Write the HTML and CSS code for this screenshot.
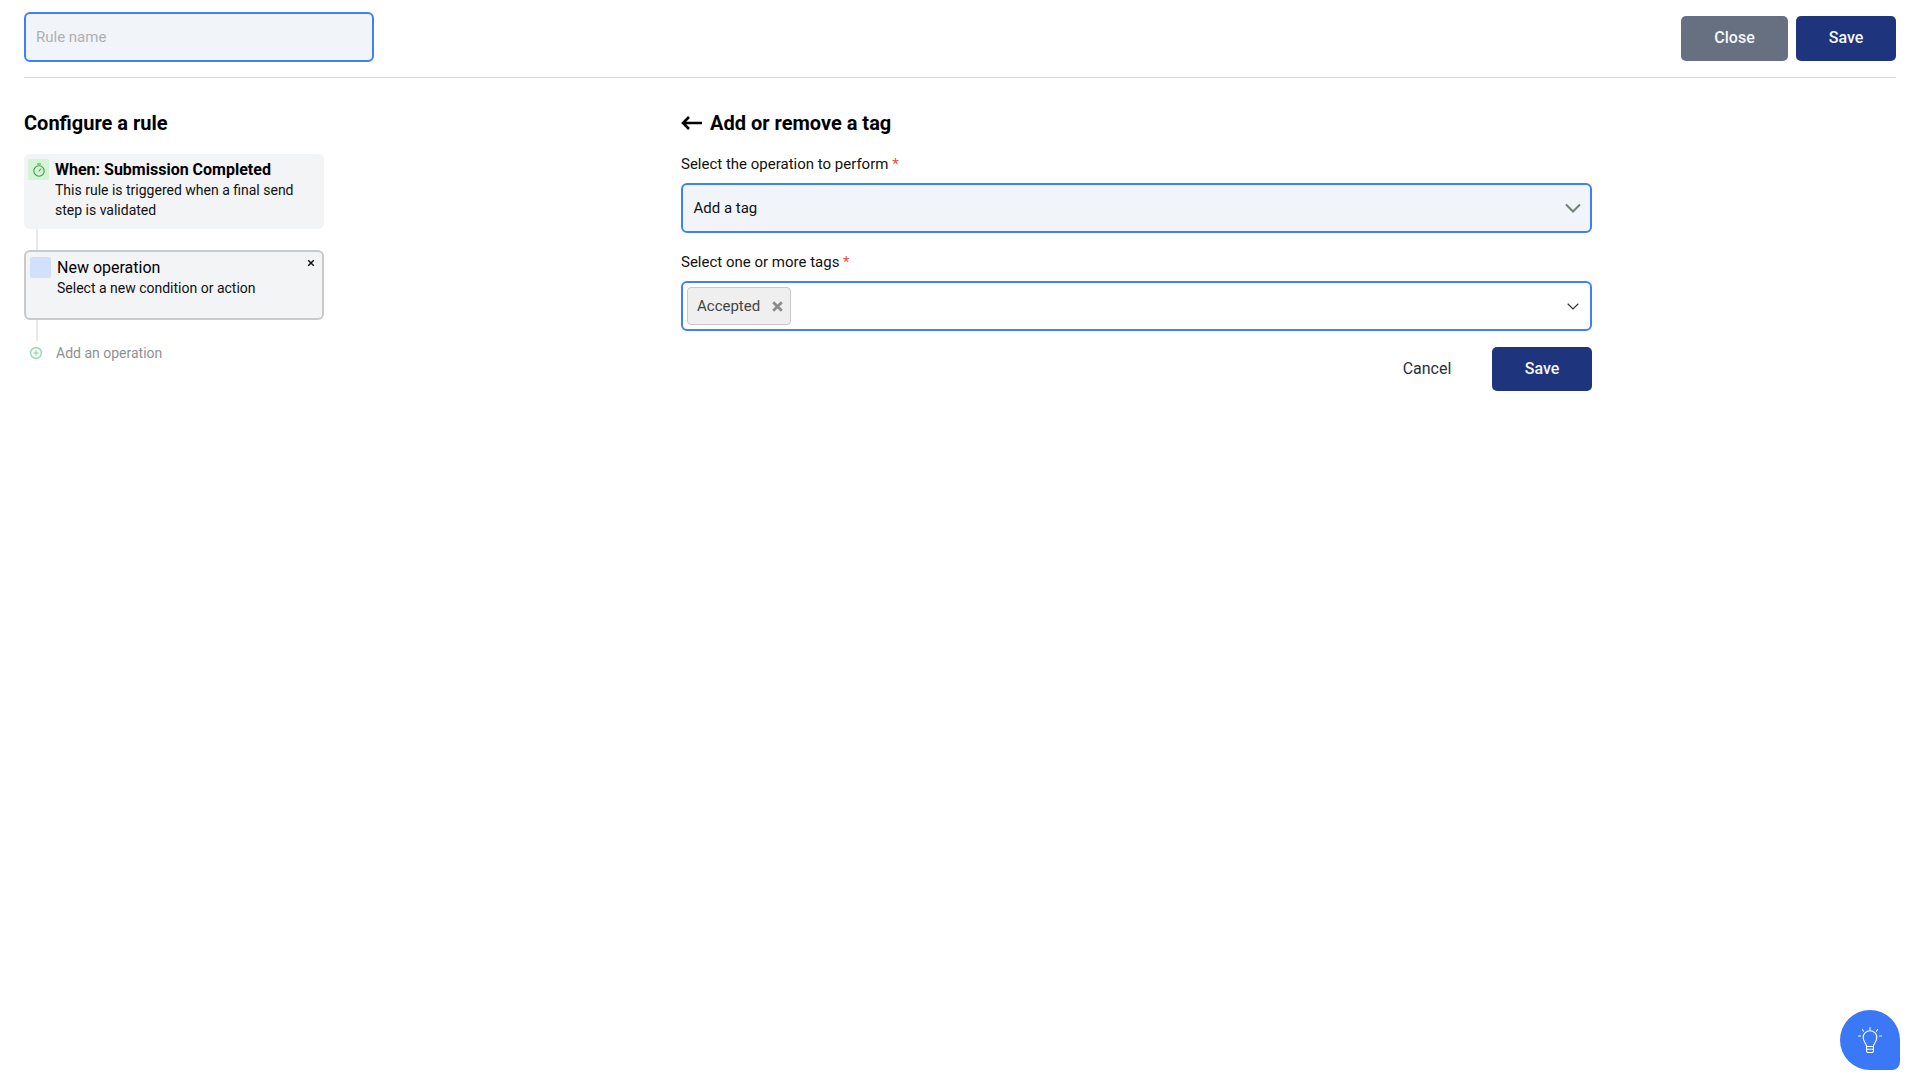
FILE: index.html
```html
<!DOCTYPE html>
<html lang="en">
<head>
<meta charset="utf-8">
<title>Configure a rule</title>
<link rel="stylesheet" href="styles.css">
</head>
<body>
<header class="topbar">
  <input class="rule-name" type="text" placeholder="Rule name">
  <div class="top-actions">
    <button class="btn btn-grey">Close</button>
    <button class="btn btn-navy">Save</button>
  </div>
</header>
<main class="layout">
  <section class="rail">
    <h2 class="heading">Configure a rule</h2>
    <div class="card card-when">
      <span class="chip chip-green">
        <svg width="14" height="14" viewBox="0 0 14 14" fill="none" stroke="#3f9b45" stroke-width="1.1" stroke-linecap="round"><circle cx="7" cy="8" r="5.2"/><path d="M5.5 1h3M7 8l1.8-2"/></svg>
      </span>
      <div class="card-text">
        <div class="card-title-bold">When: Submission Completed</div>
        <div class="card-desc">This rule is triggered when a final send step is validated</div>
      </div>
    </div>
    <div class="connector"></div>
    <div class="card card-new">
      <span class="chip chip-blue"></span>
      <div class="card-text">
        <div class="card-title">New operation</div>
        <div class="card-desc">Select a new condition or action</div>
      </div>
      <svg class="card-close" width="8" height="8" viewBox="0 0 8 8" stroke="#111" stroke-width="1.5"><path d="M1.2 1.2l5.6 5.6M6.8 1.2L1.2 6.8"/></svg>
    </div>
    <div class="connector"></div>
    <div class="add-op">
      <svg width="14" height="14" viewBox="0 0 14 14" fill="none" stroke="#9adfb8" stroke-width="1.6"><circle cx="7" cy="7" r="5.4"/><path d="M7 4.4v5.2M4.4 7h5.2"/></svg>
      <span>Add an operation</span>
    </div>
  </section>
  <section class="panel">
    <h2 class="heading heading-back">
      <svg width="21" height="14" viewBox="0 0 21 14" fill="none" stroke="#000" stroke-width="2.6"><path d="M21 7H2M8 1L2 7l6 6"/></svg>
      <span>Add or remove a tag</span>
    </h2>
    <div class="label label-first">Select the operation to perform <span class="req">*</span></div>
    <div class="field field-filled">
      <span>Add a tag</span>
      <svg class="chev" width="16" height="10" viewBox="0 0 16 10" fill="none" stroke="#6f8272" stroke-width="2"><path d="M1 1.5l7 7 7-7"/></svg>
    </div>
    <div class="label label-second">Select one or more tags <span class="req">*</span></div>
    <div class="field field-tags">
      <span class="tag">Accepted
        <svg width="11" height="11" viewBox="0 0 11 11" stroke="#8c8c8c" stroke-width="2.8"><path d="M1.2 1.2l8.6 8.6M9.800 1.200L1.200 9.800"/></svg>
      </span>
      <svg class="chev" width="12" height="7" viewBox="0 0 12 7" fill="none" stroke="#333" stroke-width="1.2"><path d="M.7.8L6 6l5.3-5.2"/></svg>
    </div>
    <div class="form-actions">
      <button class="btn btn-plain">Cancel</button>
      <button class="btn btn-navy">Save</button>
    </div>
  </section>
</main>
<button class="help" aria-label="Help">
  <svg width="26" height="28" viewBox="0 0 26 28" fill="none" stroke="#fff" stroke-width="1.1" stroke-linecap="round"><path d="M13 1.5v2M5.5 3.5l1 1.700M20.500 3.500l-1 1.700M1.500 10h2M22.500 10h2"/><path d="M9.600 20.500c0-3-3.400-4.400-3.400-9a6.800 6.800 0 0 1 13.600 0c0 4.600-3.400 6-3.400 9z"/><path d="M9.600 20.500h6.800v4.500a1.500 1.500 0 0 1-1.500 1.500h-3.800a1.500 1.500 0 0 1-1.500-1.500zM9.600 23.300h6.800"/></svg>
</button>
</body>
</html>
```
FILE: styles.css
```css
* { box-sizing: border-box; }
html, body { margin: 0; height: 100%; }
body {
  padding: 12px 24px 0;
  background: #fff;
  color: #111;
  font-family: Roboto, "Liberation Sans", sans-serif;
  font-size: 14px;
}
.topbar {
  display: flex;
  justify-content: space-between;
  align-items: flex-start;
  height: 66px;
  border-bottom: 1px solid #d9d9e3;
}
.rule-name {
  width: 350px;
  height: 50px;
  padding: 0 10px;
  border: 2px solid #4080f6;
  border-radius: 6px;
  background: #f1f5f9;
  font: 15px Roboto, sans-serif;
  outline: none;
}
.rule-name::placeholder { color: #aeb0b3; opacity: 1; }
.top-actions { display: flex; gap: 8px; margin-top: 4px; }
.btn {
  height: 45px;
  padding: 0 0 2px;
  border: 0;
  border-radius: 5px;
  font: 500 16px Roboto, sans-serif;
  color: #f4f7fb;
  cursor: pointer;
}
.btn-grey { width: 107px; background: #667080; }
.btn-navy { width: 100px; background: #1e347c; }
.btn-plain { width: 130px; background: none; color: #26303b; font-weight: 400; }
.layout { display: flex; gap: 357px; padding-top: 30px; }
.rail { width: 300px; flex: none; }
.panel { width: 911px; flex: none; }
.heading {
  margin: 0;
  height: 30px;
  font-size: 20px;
  line-height: 30px;
  font-weight: 700;
  color: #000;
}
.heading-back { display: flex; align-items: center; gap: 8px; }
.card {
  position: relative;
  display: flex;
  width: 300px;
  border-radius: 6px;
  background: #f3f4f6;
}
.card-when { height: 75px; margin-top: 16px; padding: 5px 4px; gap: 6px; }
.card-new { height: 70px; padding: 5px 4px; gap: 6px; border: 2px solid #c9cacc; }
.chip {
  flex: none;
  display: flex;
  align-items: center;
  justify-content: center;
  width: 21px;
  height: 21px;
  border-radius: 2px;
}
.chip-green { background: #d5f3d5; }
.chip-blue { background: #d2e1fb; }
.card-text { padding-top: 1px; }
.card-title-bold { font-size: 16px; font-weight: 700; line-height: 20px; color: #000; }
.card-title { font-size: 16px; line-height: 20px; color: #000; }
.card-desc { width: 250px; font-size: 14px; line-height: 20px; color: #111; }
.card-close { position: absolute; top: 7px; right: 7px; }
.connector { width: 2px; height: 21px; margin-left: 12px; background: #e8e8e8; }
.add-op {
  display: flex;
  align-items: center;
  gap: 13px;
  height: 24px;
  margin-left: 5px;
  color: #8f9194;
  font-size: 14px;
}
.label { font-size: 15px; line-height: 20px; color: #111; }
.label-first { margin-top: 16px; margin-bottom: 9px; }
.label-second { margin-top: 19px; margin-bottom: 9px; }
.req { color: #e8503a; }
.field {
  display: flex;
  align-items: center;
  justify-content: space-between;
  height: 50px;
  border: 2px solid #4080f6;
  border-radius: 6px;
  font-size: 15px;
}
.field-filled { padding: 0 9px 0 10.500px; background: #f1f5f9; }
.field-tags { padding: 0 11px 0 4px; background: #fff; }
.tag {
  display: flex;
  align-items: center;
  gap: 12px;
  height: 38px;
  padding: 0 7px 0 9px;
  border: 1px solid #c9c9c9;
  border-radius: 4px;
  background: #efefef;
  color: #444;
}
.form-actions { display: flex; justify-content: flex-end; margin-top: 16px; }
.form-actions .btn { height: 44px; }
.help {
  position: fixed;
  right: 20px;
  bottom: 10px;
  display: flex;
  align-items: center;
  justify-content: center;
  width: 60px;
  height: 60px;
  padding: 0;
  border: 0;
  border-radius: 50% 50% 8px 50%;
  background: #3b78f5;
}
```
